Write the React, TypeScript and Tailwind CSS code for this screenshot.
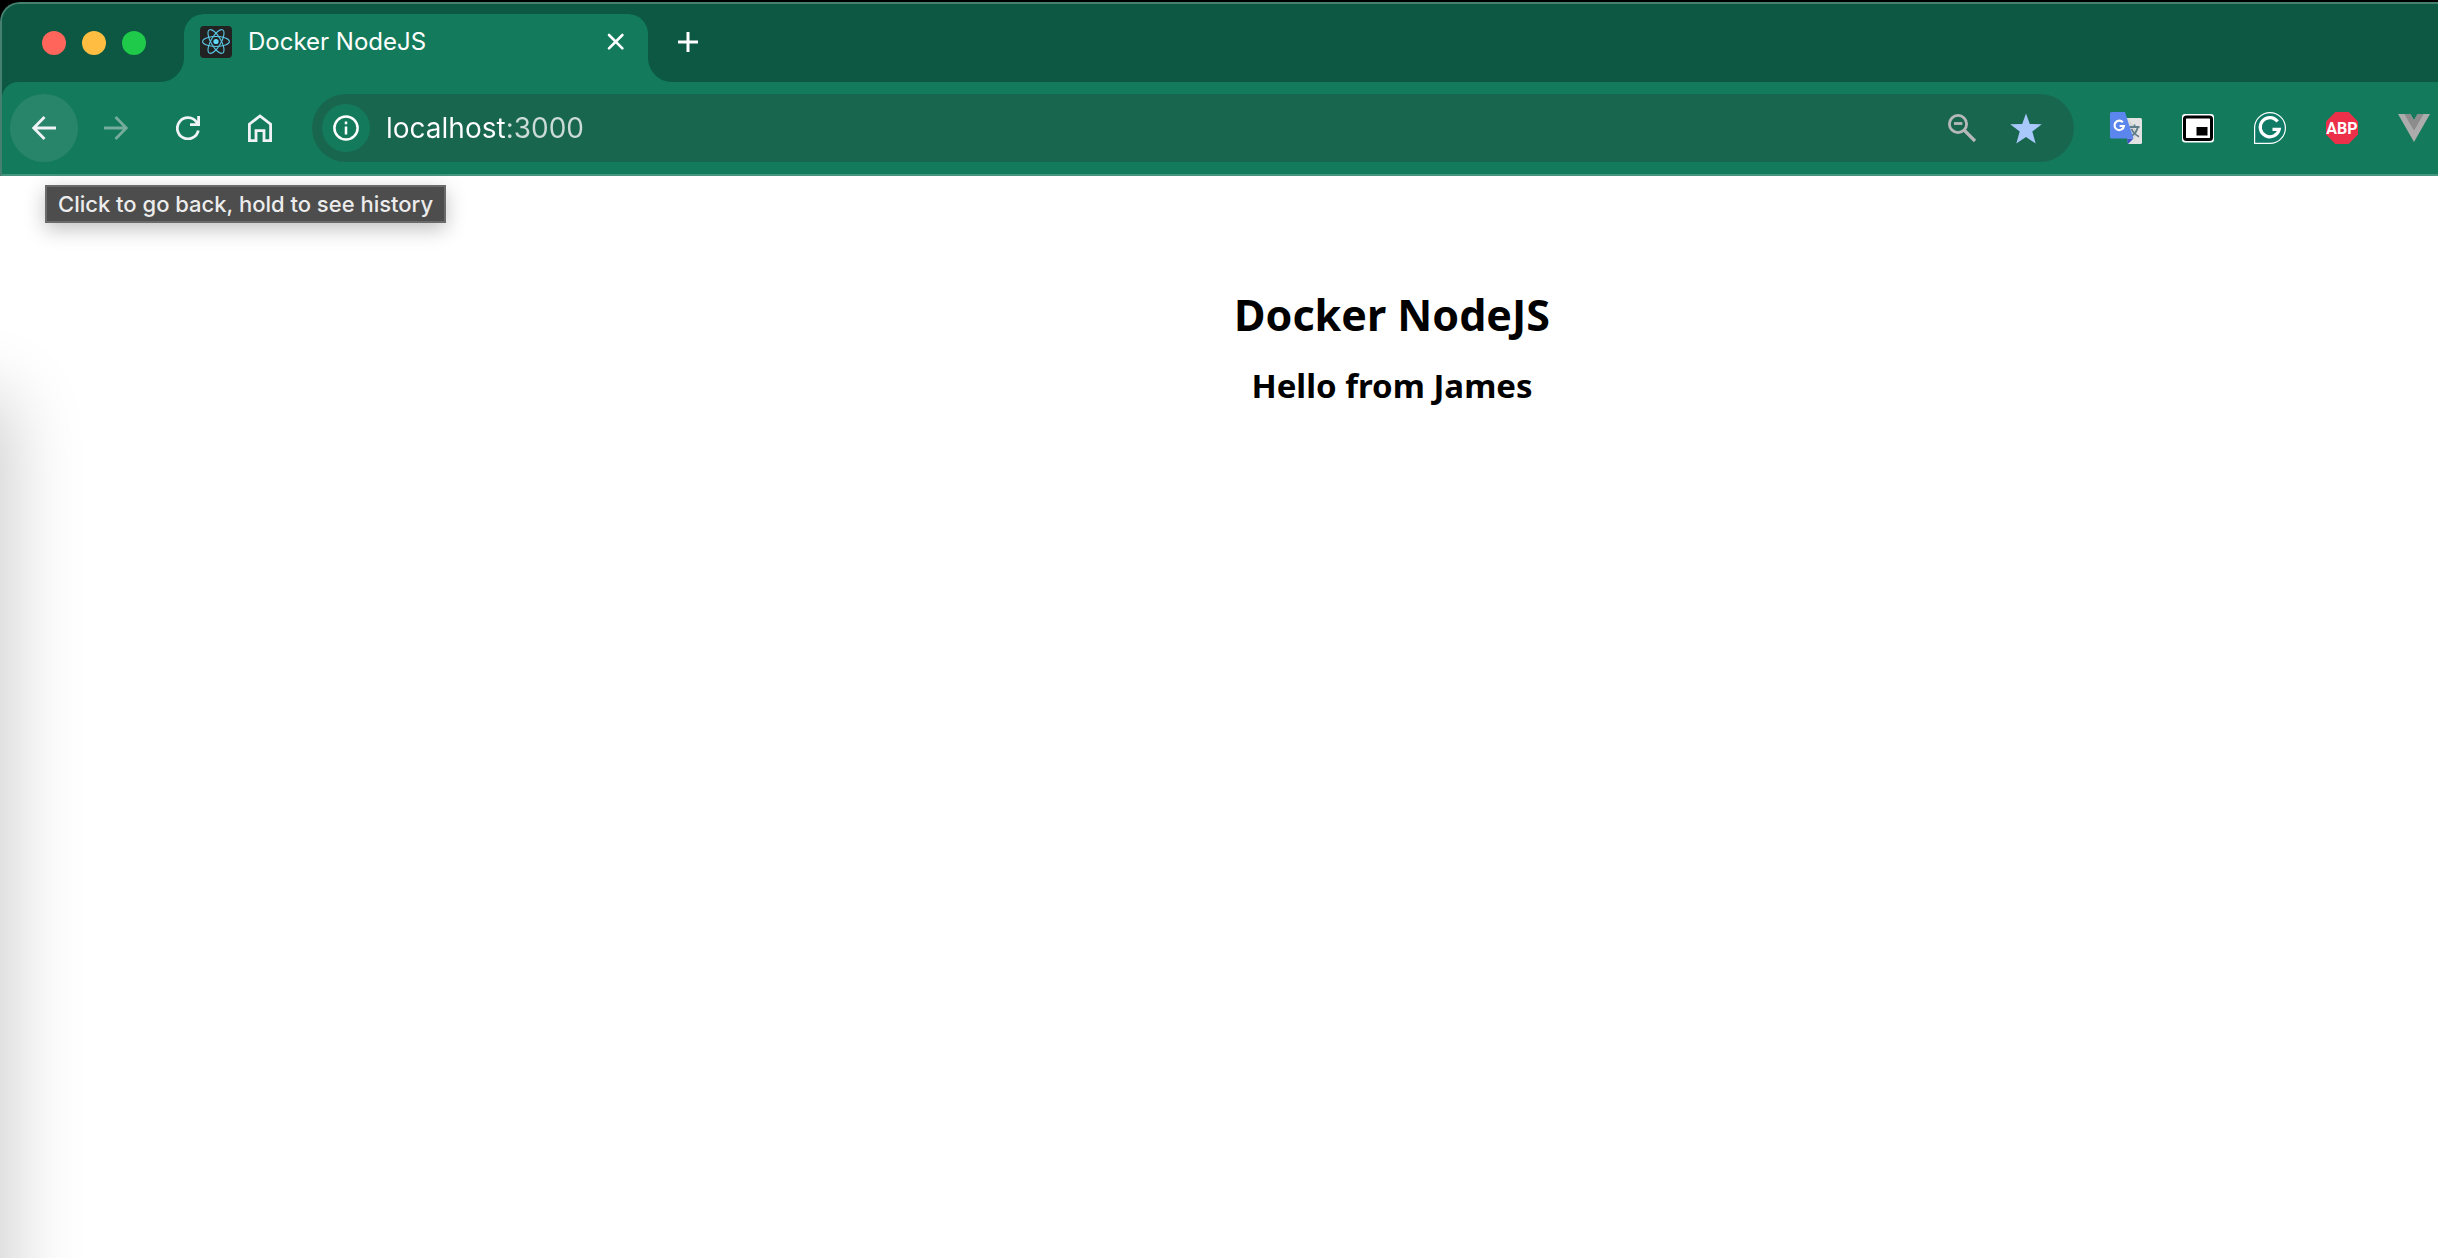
import React from "react";

const iconButton =
  "flex size-[68px] shrink-0 items-center justify-center rounded-full";

function ReactLogo() {
  return (
    <svg viewBox="0 0 32 32" className="size-8 shrink-0" aria-hidden="true">
      <rect width="32" height="32" rx="4" fill="#222" />
      <g fill="none" stroke="#61dafb" strokeWidth="1.1" opacity="0.9">
        <ellipse cx="16" cy="15.5" rx="13.4" ry="5" />
        <ellipse cx="16" cy="15.5" rx="13.4" ry="5" transform="rotate(60 16 15.5)" />
        <ellipse cx="16" cy="15.5" rx="13.4" ry="5" transform="rotate(120 16 15.5)" />
      </g>
      <circle cx="16" cy="15.5" r="2.6" fill="#61dafb" />
    </svg>
  );
}

function TabStrip() {
  return (
    <div className="flex h-[78px] items-stretch bg-[#137b5c]">
      <div className="flex w-[182px] shrink-0 items-center gap-4 rounded-br-3xl bg-[#0c5842] pl-10">
        <button aria-label="Close window" className="size-6 rounded-full bg-[#ff655b]" />
        <button aria-label="Minimize window" className="size-6 rounded-full bg-[#ffbe41]" />
        <button aria-label="Zoom window" className="size-6 rounded-full bg-[#1fc94a]" />
      </div>
      <div className="flex w-[464px] shrink-0 bg-[#0c5842] pt-[10px]">
        <div className="flex w-full items-center rounded-t-[20px] bg-[#137b5c] pb-3 pl-4 pr-5">
          <ReactLogo />
          <span className="ml-4 flex-1 text-2xl text-white">Docker NodeJS</span>
          <button aria-label="Close tab" className="flex size-6 items-center justify-center">
            <svg viewBox="0 0 24 24" className="size-6" fill="none" stroke="#fff" strokeWidth="2.6" strokeLinecap="round">
              <path d="M5 5 18.4 18.4M18.4 5 5 18.4" />
            </svg>
          </button>
        </div>
      </div>
      <div className="flex flex-1 items-center rounded-bl-3xl bg-[#0c5842] pb-[2px] pl-7">
        <button aria-label="New tab" className="flex size-6 items-center justify-center">
          <svg viewBox="0 0 24 24" className="size-6" fill="none" stroke="#fff" strokeWidth="3">
            <path d="M12 2v20M2 12h20" />
          </svg>
        </button>
      </div>
    </div>
  );
}

function Omnibox() {
  return (
    <div className="ml-[18px] flex h-[68px] flex-1 items-center rounded-full bg-[#19664f] pl-[10px] pr-8">
      <button
        aria-label="View site information"
        className="flex size-12 shrink-0 items-center justify-center rounded-full bg-[#137b5c]"
      >
        <svg viewBox="0 0 26 26" className="size-[26px]" fill="none" stroke="#fff">
          <circle cx="13" cy="13" r="11.6" strokeWidth="2.5" />
          <path d="M13 11.5v8M13 6.6v2.6" strokeWidth="2.5" />
        </svg>
      </button>
      <input
        type="text"
        aria-label="Address and search bar"
        defaultValue="localhost:3000"
        className="ml-4 min-w-0 flex-1 bg-[linear-gradient(to_right,#fff_120px,#cbdbd6_120px)] bg-clip-text text-[28px] leading-10 text-transparent outline-none"
      />
      <button aria-label="Zoom level" className="flex size-8 items-center justify-center">
        <svg viewBox="0 0 32 32" className="size-8" fill="none" stroke="#b7b9b8">
          <circle cx="12" cy="12" r="8.6" strokeWidth="2.8" />
          <path d="M8 11.500h8.400" strokeWidth="2.8" />
          <path d="M18 18l11 11" strokeWidth="3.2" />
        </svg>
      </button>
      <button aria-label="Edit bookmark" className="ml-8 flex size-8 items-center justify-center">
        <svg viewBox="0 0 32 32" className="size-8" fill="#a8c7fa">
          <path d="M16 1.500l3.800 10.400 12 .4-9.500 7.300 3.400 12L16 25.100 6.300 31.600l3.400-12L.2 12.300l12-.4z" />
        </svg>
      </button>
    </div>
  );
}

function Extensions() {
  const box = "flex size-8 shrink-0 items-center justify-center";
  return (
    <div className="ml-9 mr-2 flex shrink-0 items-center gap-10">
      <button aria-label="Google Translate" className={box}>
        <svg viewBox="0 0 32 32" className="size-8">
          <path d="M15 6h15.500Q32 6 32 7.500v23q0 1.500-1.500 1.500H18z" fill="#e2e2e2" />
          <path d="M17 26.500h6.500L18 32z" fill="#3d50c4" />
          <path d="M18 6l6 20.500 3-6z" fill="#c4c6c9" opacity=".5" />
          <g fill="none" stroke="#607d8b" strokeWidth="1.800">
            <path d="M19.500 15h10M24.500 12.500V15M27.800 15c-.6 3.700-3.400 7.200-7 9.500M21.500 17c1.200 3 4 5.700 7.500 7.700" />
          </g>
          <path d="M1.500 0H15l8.500 26.500h-22Q0 26.500 0 25V1.500Q0 0 1.500 0z" fill="#5a86ee" />
          <path d="M12.800 10.300A4.700 4.700 0 1 0 13.900 14H9.600" fill="none" stroke="#fff" strokeWidth="2.200" />
        </svg>
      </button>
      <button aria-label="Picture in picture" className={box}>
        <svg viewBox="0 0 32 32" className="size-8">
          <rect y="2" width="32" height="28.500" rx="3" fill="#fff" />
          <rect x="2.500" y="5" width="27" height="22.500" rx="2" fill="#fff" stroke="#000" strokeWidth="3" />
          <rect x="14.500" y="15" width="11" height="8.500" fill="#000" />
        </svg>
      </button>
      <button aria-label="Grammarly" className={box}>
        <svg viewBox="0 0 32 32" className="size-8" fill="none" stroke="#fff">
          <path d="M.6 31.400V16A15.400 15.400 0 1 1 16 31.400z" fill="#0f7a66" strokeWidth="1.200" />
          <path d="M23.600 9.500A9.600 9.600 0 1 0 25.200 17.300H18.500" strokeWidth="3.200" />
        </svg>
      </button>
      <button aria-label="Adblock Plus" className={box}>
        <svg viewBox="0 0 32 32" className="size-8">
          <path d="M9.400 0h13.200L32 9.400v13.200L22.600 32H9.400L0 22.600V9.400z" fill="#ed3049" />
          <text x="16" y="22" textAnchor="middle" fontSize="16" fontWeight="700" fill="#fff" className="font-['Roboto',sans-serif]">
            ABP
          </text>
        </svg>
      </button>
      <button aria-label="Vue.js devtools" className={box}>
        <svg viewBox="0 0 32 32" className="size-8">
          <path d="M0 2h12.400L16 8.200 19.600 2H32L16 30z" fill="#acacac" />
          <path d="M6.400 2h6L16 8.200 19.600 2h6L16 18.800z" fill="#8c8c8c" />
        </svg>
      </button>
    </div>
  );
}

function Toolbar() {
  return (
    <div className="relative flex h-[94px] items-center rounded-tl-2xl border-b-2 border-[#46957d] bg-[#137b5c] pl-2">
      <div className="flex shrink-0 gap-1">
        <button aria-label="Back" aria-describedby="back-tip" className={iconButton + " bg-[#29856a]"}>
          <svg viewBox="0 0 24 24" className="size-6" fill="none" stroke="#f0f3f5" strokeWidth="2.8">
            <path d="M24 12H2M12.500 1 1.700 12 12.500 23" />
          </svg>
        </button>
        <button aria-label="Forward" disabled className={iconButton}>
          <svg viewBox="0 0 24 24" className="size-6" fill="none" stroke="#75ac9b" strokeWidth="2.8">
            <path d="M0 12h22M11.500 1 22.300 12 11.500 23" />
          </svg>
        </button>
        <button aria-label="Reload" className={iconButton}>
          <svg viewBox="0 0 24 24" className="size-6" fill="none" stroke="#f0f3f5" strokeWidth="2.8">
            <path d="M22.300 14.500A10.600 10.600 0 1 1 20.600 6.200L22.300 8.500M22.600 0v8.600H14" />
          </svg>
        </button>
        <button aria-label="Home" className={iconButton}>
          <svg viewBox="0 0 24 28" className="h-7 w-6" fill="none" stroke="#f0f3f5" strokeWidth="2.8">
            <path d="M1.400 26.600V10.200L12 2l10.600 8.200V26.600H16V16.600H8v10z" />
          </svg>
        </button>
      </div>
      <Omnibox />
      <Extensions />
      <div
        id="back-tip"
        role="tooltip"
        className="absolute left-[43px] top-[103px] z-10 border-2 border-[#6a6a6a] bg-[#4d4d4d] px-[11px] text-[22px] font-medium leading-[34px] whitespace-nowrap text-[#ececec] shadow-[0_6px_20px_rgba(0,0,0,0.25)]"
      >
        Click to go back, hold to see history
      </div>
    </div>
  );
}

export default function App() {
  return (
    <div className="flex min-h-screen flex-col bg-black pt-[2px] font-['Inter',sans-serif]">
      <header className="rounded-tl-[20px] border-l-2 border-t-2 border-[#46806f] bg-[#0c5842]">
        <div className="overflow-hidden rounded-tl-[18px]">
          <TabStrip />
        </div>
        <Toolbar />
      </header>
      <main className="relative flex-1 overflow-hidden bg-white pl-[346px] pt-[109px] text-center font-['Noto_Sans',sans-serif] font-bold text-black">
        <div className="absolute -bottom-40 -left-60 top-[230px] w-60 shadow-[0_0_70px_10px_rgba(0,0,0,0.2)]" />
        <h1 className="text-[43px] leading-[60px]">Docker NodeJS</h1>
        <h2 className="mt-4 text-[33px] leading-[50px]">Hello from James</h2>
      </main>
    </div>
  );
}
